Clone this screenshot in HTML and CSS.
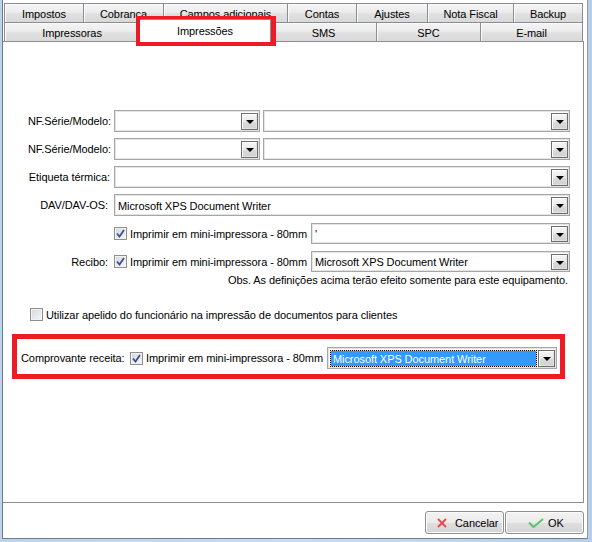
FILE: index.html
```html
<!DOCTYPE html>
<html lang="pt">
<head>
<meta charset="utf-8">
<title>Impressões</title>
<link rel="stylesheet" href="styles.css">
</head>
<body>
<div class="window">
  <div class="tabs">
    <div class="tabrow">
      <div class="tab first t11">Impostos</div>
      <div class="tab t12">Cobrança</div>
      <div class="tab t13">Campos adicionais</div>
      <div class="tab t14">Contas</div>
      <div class="tab t15">Ajustes</div>
      <div class="tab t16">Nota Fiscal</div>
      <div class="tab t17">Backup</div>
    </div>
    <div class="tabrow">
      <div class="tab first t21">Impressoras</div>
      <div class="tab active t22">Impressões</div>
      <div class="tab t23">SMS</div>
      <div class="tab t24">SPC</div>
      <div class="tab t25">E-mail</div>
    </div>
  </div>

  <div class="panel">
    <div class="form">
      <div class="row">
        <span class="lbl">NF.Série/Modelo:</span>
        <div class="ctl">
          <div class="select short"><span class="val"></span><span class="btn"><span class="arrow"></span></span></div>
          <div class="select grow"><span class="val"></span><span class="btn"><span class="arrow"></span></span></div>
        </div>
      </div>
      <div class="row">
        <span class="lbl">NF.Série/Modelo:</span>
        <div class="ctl">
          <div class="select short"><span class="val"></span><span class="btn"><span class="arrow"></span></span></div>
          <div class="select grow"><span class="val"></span><span class="btn"><span class="arrow"></span></span></div>
        </div>
      </div>
      <div class="row">
        <span class="lbl pr1">Etiqueta térmica:</span>
        <div class="ctl">
          <div class="select grow"><span class="val"></span><span class="btn"><span class="arrow"></span></span></div>
        </div>
      </div>
      <div class="row">
        <span class="lbl pr3">DAV/DAV-OS:</span>
        <div class="ctl">
          <div class="select grow"><span class="val">Microsoft XPS Document Writer</span><span class="btn"><span class="arrow"></span></span></div>
        </div>
      </div>
      <div class="row small">
        <span class="lbl"></span>
        <div class="ctl">
          <label class="check wide"><span class="cb"><svg viewBox="0 0 11 11" width="11" height="11"><path d="M2 5.5 L4.5 8.5 L9 2" fill="none" stroke="#3c5190" stroke-width="1.8"/></svg></span>Imprimir em mini-impressora - 80mm</label>
          <div class="select grow"><span class="val">'</span><span class="btn"><span class="arrow"></span></span></div>
        </div>
      </div>
      <div class="row small">
        <span class="lbl pr3">Recibo:</span>
        <div class="ctl">
          <label class="check wide"><span class="cb"><svg viewBox="0 0 11 11" width="11" height="11"><path d="M2 5.5 L4.5 8.5 L9 2" fill="none" stroke="#3c5190" stroke-width="1.8"/></svg></span>Imprimir em mini-impressora - 80mm</label>
          <div class="select grow"><span class="val">Microsoft XPS Document Writer</span><span class="btn"><span class="arrow"></span></span></div>
        </div>
      </div>
      <div class="obs">Obs. As definições acima terão efeito somente para este equipamento.</div>
      <label class="check apelido"><span class="cb"></span>Utilizar apelido do funcionário na impressão de documentos para clientes</label>

      <div class="highlight">
        <span class="hlbl">Comprovante receita:</span>
        <label class="check wide"><span class="cb"><svg viewBox="0 0 11 11" width="11" height="11"><path d="M2 5.5 L4.5 8.5 L9 2" fill="none" stroke="#3c5190" stroke-width="1.8"/></svg></span>Imprimir em mini-impressora - 80mm</label>
        <div class="select grow focus"><span class="hlwrap"><span class="hl">Microsoft XPS Document Writer</span></span><span class="btn"><span class="arrow"></span></span></div>
      </div>
    </div>
  </div>

  <div class="footer">
    <button class="button cancel"><svg class="ico" width="10" height="10" viewBox="0 0 10 10"><path d="M1 1 L9 9 M9 1 L1 9" stroke="#e8464e" stroke-width="1.8" fill="none"/></svg>Cancelar</button>
    <button class="button ok"><svg class="ico" width="16" height="10" viewBox="0 0 16 10"><path d="M1 4.5 L5.5 9 L15 1" stroke="#5cc06c" stroke-width="2" fill="none"/></svg>OK</button>
  </div>
</div>
<div class="annot"></div>
</body>
</html>
```
FILE: styles.css
```css
* { box-sizing: border-box; }
html, body { margin: 0; padding: 0; }
body {
  width: 592px;
  height: 542px;
  overflow: hidden;
  background: linear-gradient(90deg, #bcd3ec 0%, #c8ddf3 50%, #b7cfea 100%);
  font-family: "Liberation Sans", Arial, sans-serif;
  font-size: 11px;
  letter-spacing: -0.08px;
  color: #000;
  position: relative;
}
.window {
  margin-left: 2px;
  width: 586px;
  height: 539px;
  background: #fff;
  border-left: 1px solid #6f7b89;
  border-right: 1px solid #8d98a6;
  border-bottom: 1px solid #6f7b89;
  display: flex;
  flex-direction: column;
}
.tabs { padding: 3px 0 0 1px; }
.tabrow { display: flex; height: 19px; }
.tab {
  height: 19px;
  border-top: 1px solid #8a8d95;
  border-right: 1px solid #8a8d95;
  background: linear-gradient(#f4f4f4, #ececec 45%, #e0e0e0 55%, #d9d9d9);
  box-shadow: inset 1px 1px 0 #fbfbfb;
  display: flex;
  align-items: center;
  justify-content: center;
  padding-top: 1px;
  white-space: nowrap;
}
.tab.first { border-left: 1px solid #8a8d95; }
.t11 { width: 80px; } .t12 { width: 80px; } .t13 { width: 124px; }
.t14 { width: 69px; } .t15 { width: 71px; } .t16 { width: 86px; } .t17 { width: 69px; }
.t21 { width: 136px; } .t22 { width: 131px; } .t23 { width: 106px; }
.t24 { width: 104px; } .t25 { width: 102px; }
.tab.active {
  background: #fff;
  box-shadow: none;
  height: 23px;
  margin-top: -3px;
  position: relative;
  z-index: 2;
  padding-top: 0;
}
.panel {
  width: 581px;
  height: 462px;
  border-top: 1px solid #8a8d95;
  border-right: 1px solid #8a8d95;
  border-bottom: 1px solid #8a8d95;
}
.form {
  padding: 68px 13px 0 0;
  display: flex;
  flex-direction: column;
}
.row { display: flex; align-items: center; height: 22px; margin-top: 6px; }
.row:first-child { margin-top: 0; }
.row.small { height: 21px; margin-top: 7px; }
.lbl { width: 108px; margin-right: 3px; text-align: right; white-space: nowrap; }
.lbl.pr1 { padding-right: 1px; }
.lbl.pr3 { padding-right: 3px; }
.ctl { flex: 1; display: flex; align-items: stretch; height: 100%; }
.select {
  height: 100%;
  display: flex;
  align-items: stretch;
  border: 1px solid #a6a6a6;
  box-shadow: inset 0 0 0 1px #e4e4e4;
  background: #fff;
  padding: 2px 1px 1px 1px;
}
.select.short { width: 146px; margin-right: 3px; flex: none; }
.select.grow { flex: 1; }
.val { flex: 1; padding-left: 2px; display: flex; align-items: center; white-space: nowrap; overflow: hidden; }
.btn {
  width: 17px;
  flex: none;
  border: 1px solid #6e6e6e;
  box-shadow: inset 1px 1px 0 #fff, inset -1px -1px 0 #e2e2e2;
  background: linear-gradient(#f6f6f6, #e9e9e9 50%, #dadada 51%, #d2d2d2);
  display: flex;
  align-items: center;
  justify-content: center;
}
.arrow {
  width: 0; height: 0;
  border-left: 4px solid transparent;
  border-right: 4px solid transparent;
  border-top: 4px solid #000;
  margin-top: 1px;
}
.check { display: flex; align-items: center; white-space: nowrap; }
.check.wide { width: 197px; flex: none; }
.cb {
  width: 13px; height: 13px; flex: none;
  border: 1px solid #8e8f8f;
  background: linear-gradient(135deg, #d3d7dd, #f7f7f7);
  box-shadow: inset 0 0 0 1px #f2f2f2;
  margin-right: 3px;
  display: flex; align-items: center; justify-content: center;
}
.cb svg { display: block; }
.obs { margin-top: 2px; line-height: 13px; text-align: right; padding-right: 2px; white-space: nowrap; }
.check.apelido { margin-top: 21px; margin-left: 27px; height: 13px; }
.highlight {
  margin: 13px 5px 0 9px;
  height: 45px;
  border: 5px solid #ed1c24;
  display: flex;
  align-items: stretch;
  padding: 8px 3px 5px 4px;
}
.hlbl { width: 109px; flex: none; display: flex; align-items: center; white-space: nowrap; }
.highlight .check { align-self: center; }
.focus { padding: 1px 1px 1px 1px; }
.hlwrap { flex: 1; background: #ffd45e; margin: 1px 1px 0 1px; display: flex; }
.hl {
  flex: 1;
  background: #3399ff;
  background-clip: padding-box;
  border: 1px dotted #000;
  color: #fff;
  padding-left: 2px;
  display: flex; align-items: center;
  white-space: nowrap;
}
.focus .btn { margin: 1px 0 0 0; }
.footer {
  flex: 1;
  display: flex;
  justify-content: flex-end;
  align-items: flex-start;
  gap: 1px;
  padding: 8px 3px 0 0;
}
.button {
  width: 79px; height: 23px;
  border: 1px solid #8f9093;
  border-radius: 3px;
  background: linear-gradient(#f3f3f3, #ebebeb 50%, #dedede 51%, #d4d4d4);
  box-shadow: inset 0 0 0 1px #fbfbfb;
  font-family: "Liberation Sans", Arial, sans-serif;
  font-size: 11px;
  letter-spacing: -0.08px;
  color: #000;
  display: flex;
  align-items: center;
  padding: 0;
}
.button .ico { display: block; flex: none; }
.cancel { padding-left: 11px; }
.cancel .ico { margin-right: 8px; }
.ok { padding-left: 22px; }
.ok .ico { margin-right: 4px; }
.annot {
  position: absolute;
  left: 136px;
  top: 16px;
  width: 140px;
  height: 30px;
  border: 5px solid #ed1c24;
}
```
